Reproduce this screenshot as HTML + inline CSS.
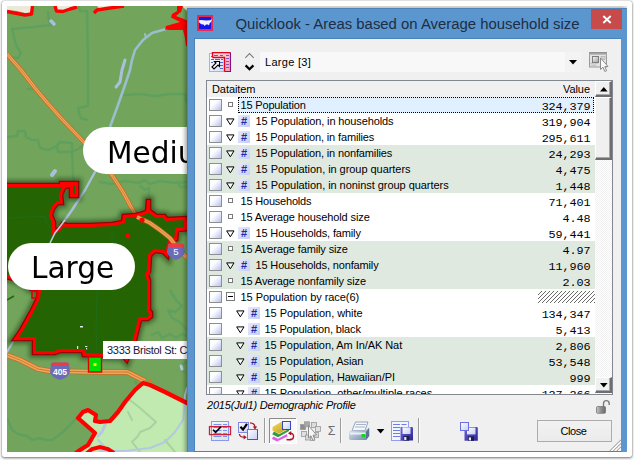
<!DOCTYPE html>
<html><head><meta charset="utf-8">
<style>
html,body{margin:0;padding:0;background:#fff;}
body{width:634px;height:460px;position:relative;overflow:hidden;font-family:"Liberation Sans",sans-serif;font-size:11px;color:#000;}
.abs{position:absolute;}
#frame{position:absolute;left:2px;top:1px;width:630px;height:456px;background:#fff;border-radius:2px;box-shadow:0 1px 3px rgba(0,0,0,.55),0 0 1px rgba(0,0,0,.5);}
#content{position:absolute;left:7px;top:6px;width:620px;height:446px;overflow:hidden;background:#72a55b;}
#content>*{position:absolute;}
/* everything inside #content uses page coords shifted by (-7,-6) via wrapper */
#pg{left:-7px;top:-6px;width:634px;height:460px;}
#pg>*{position:absolute;}
.lbl{background:#fff;border-radius:24px;font-family:"DejaVu Sans","Liberation Sans",sans-serif;font-size:31px;line-height:47px;height:47px;white-space:nowrap;color:#000;}
#win{left:187px;top:8px;width:440px;height:460px;background:#5b97ce;box-shadow:inset 1px 1px 0 #4a83bd,-2px 0 4px rgba(0,0,0,.35);}
#win>*{position:absolute;}
#client{left:7px;top:30px;width:426px;height:412px;background:#f0f0f0;border:1px solid #4a82bb;border-right-color:#5b97ce}
#client>*{position:absolute;}
.t{white-space:nowrap;letter-spacing:-0.08px;}
.row{position:absolute;left:0;width:388px;height:16px;}
.row.g{background:#dfe9df;}
.row>*{position:absolute;}
.cb{left:2px;top:2px;width:11px;height:10px;border:1px solid #8e8f8f;background:linear-gradient(135deg,#ffffff 35%,#e2e6fb 62%,#b6c0f6 100%);}
.sq{top:5px;width:3px;height:3px;border:1px solid #7a7a7a;background:#fff;}
.tri{top:5px;width:9px;height:8px;}
.hash{top:2px;width:12px;height:12px;background:linear-gradient(135deg,#e6e8fb,#c8cff4);color:#1a2aa8;font-weight:bold;font-size:11px;line-height:13px;text-align:center;}
.nm{top:1px;line-height:14px;}
.val{right:4.500px;top:2.500px;line-height:14px;font-family:"Liberation Mono",monospace;font-size:11.800px;letter-spacing:-0.100px;white-space:nowrap;}

.sbb{width:14px;background:#f0f0f0;border-style:solid;border-width:1px 2px 2px 1px;border-color:#fff #6e6e6e #6e6e6e #fff;box-shadow:inset -1px -1px 0 #a8a8a8}
</style></head><body>
<div id="frame"></div>
<div id="content"><div id="pg">
<svg id="map" style="left:0;top:0" width="634" height="460" viewBox="0 0 634 460">
<defs>
 <filter id="bl" x="-20%" y="-20%" width="140%" height="140%"><feGaussianBlur stdDeviation="2.2"/></filter>
</defs>
<rect x="0" y="0" width="634" height="460" fill="#72a55b"/>
<!-- beige beyond top border -->
<path d="M7 6 L33 6 L32 13 L25 13 L17 11 L7 10 Z" fill="#ece8da"/>
<path d="M55 6 L77 6 L70 8 L63 10 L57 10 Z" fill="#ece8da"/>
<path d="M97 6 L123 6 L110 7 L100 9 Z" fill="#ece8da"/>
<!-- light green region bottom -->
<path id="lg" d="M187 403 L165 392 L150 385 L143 383 L135 390 L125 402 L118 412 L110 421 L100 422 L95 421 L96 415 L88 410 L83 412 L78 418 L95 433 L88 445 L80 450 L75 454 L187 454 Z" fill="#c0eab0"/>
<!-- boundary lines (medium green) -->
<g fill="none" stroke="#60a05e" stroke-width="2.500" stroke-linejoin="round" stroke-linecap="round">
 <path d="M79 7 L80 11 L87 11 L88 60 L88 106 L78 108 L79 113 L81 118 L87 120"/>
 <path d="M48 12 L49 22 L52 25 L33 27 L12 29 L14 37 L16 45 L21 53 L18 58 L7 57"/>
 <path d="M28 89 L33 89"/>
 <path d="M7 137 L17 136 L18 131 L25 131 L26 137 L32 140 L38 140 L40 148 L48 150 L57 146 L58 152 L72 152 L73 175 L74 182"/>
 <path d="M57 146 L60 142 L72 143 L72 152 L80 148 L86 142"/>
 <path d="M125 95 L140 94 L155 96 L170 94 L185 94 L186 102"/>
 <path d="M100 182 L112 184 L125 181 L138 183 L145 180 L150 184 L160 181 L175 183 L187 182"/>
 <path d="M140 186 L145 190 L149 188 L149 198"/>
 <path d="M178 182 L180 187 L187 187"/>
 <path d="M170 290 L176 300 L182 306 L175 312 L168 310 L172 318 L180 322 L187 330"/>
 <path d="M152 335 L158 332 L162 338 L170 334 L176 338 L182 334 L187 336"/>
 <path d="M187 362 L180 366 L184 372"/>
 
 <path d="M8 420 L12 430 L18 434 L27 436 L32 440 L40 438 L45 440 L52 440 L62 433 L70 425 L77 418"/>
 <path d="M135 381 L138 386"/>
</g>
<g fill="none" stroke="#a6d3a0" stroke-width="2" stroke-linejoin="round" stroke-linecap="round">
 <path d="M130 400 L140 408 L156 422 L150 428 L140 432 L138 436 L132 442 L140 452"/>
 <path d="M165 440 L175 452"/>
 <path d="M128 412 L132 420"/>
</g>
<!-- rivers -->
<g fill="none" stroke="#9cbdcc" stroke-width="2.6" stroke-linecap="round" stroke-linejoin="round">
 <path d="M166 29 L152 33 L143 40 L135 50 L132 60 L130 70 L125 85 L118 105 L110 127"/>
 <path d="M145 34 L146 38" stroke-width="2"/>
</g>
<g fill="none" stroke="#a9c0dc" stroke-width="3" stroke-linecap="round" stroke-linejoin="round">
 <path d="M125 60 L122 70 L120 82 L116 87"/>
 <path d="M95 172 L85 190 L72 210 L65 220 L55 233 L50 243" stroke-width="2.4"/>
 <path d="M50 290 L42 294" stroke-width="2"/>
 <path d="M13 342 L7 352" stroke-width="2"/>
 <path d="M51 21 L54 24" stroke-width="3.5"/>
 <path d="M52 175 L55 171" stroke-width="4"/>
</g>
<g fill="none" stroke="#b4c8e4" stroke-width="2" stroke-linecap="round" stroke-linejoin="round">
 <path d="M187 388 L185 395 L184 410 L183 420 L175 432 L165 442 L150 448 L125 451 L100 451"/>
 <path d="M105 425 L102 432 L98 436" stroke-width="3"/>
 <path d="M98 440 L104 446"/>
 <path d="M181 366 L182 369" stroke-width="3"/>
</g>
<!-- orange roads -->
<g fill="none" stroke-linecap="butt" stroke-linejoin="round">
 <path id="r1" d="M7 54 L21 70 L35 88 L45 100 L60 117 L80 138 L100 160 L112 175 L123 192 L130 205 L137 217 L150 223 L160 230 L170 238 L176 246 L187 258" stroke="#cc6a1e" stroke-width="4.6"/>
 <path d="M7 54 L21 70 L35 88 L45 100 L60 117 L80 138 L100 160 L112 175 L123 192 L130 205 L137 217 L150 223 L160 230 L170 238 L176 246 L187 258" stroke="#eda75f" stroke-width="3"/>
 <path d="M7 54 L21 70 L35 88 L45 100 L60 117 L80 138 L100 160 L112 175 L123 192 L130 205 L137 217 L150 223 L160 230 L170 238 L176 246 L187 258" stroke="#d07a30" stroke-width="0.8"/>
 <path id="r2" d="M7 355 L20 360 L38 369 L50 371 L100 372 L127 372 L135 376 L145 381" stroke="#cc6a1e" stroke-width="5.6"/>
 <path d="M7 355 L20 360 L38 369 L50 371 L100 372 L127 372 L135 376 L145 381" stroke="#eda75f" stroke-width="4"/>
 <path d="M7 355 L20 360 L38 369 L50 371 L100 372 L127 372 L135 376 L145 381" stroke="#d07a30" stroke-width="1"/>
</g>
<!-- Large region -->
<clipPath id="bigclip"><path d="M0 184 L60 184 L60 182 L78 182 L78 197 L70 197 L70 187 L65 188 L62 195 L63 204 L58 204 L54 209 L52 215 L55 222 L55 230 L59 228 L62 223 L67 224 L90 224 L112 223 L122 221 L123 215 L135 214 L140 213 L146 211 L147 200 L150 200 L150 210 L157 215 L165 215 L167 218 L186 217 L187 222 L187 230 L178 231 L177 240 L170 243 L168 258 L163 253 L155 252 L151 256 L150 272 L148 275 L150 280 L150 310 L152 312 L152 317 L148 320 L141 320 L139 328 L136 340 L131 352 L127 362 L123 357.500 L100 356.500 L83 356 L82 352 L60 352 L55 354 L33 354 L33 340 L13 340 L20 330 L30 312 L37 298 L38 290 L31 290 L20 282 L0 276 Z"/></clipPath>
<path id="big" d="M0 184 L60 184 L60 182 L78 182 L78 197 L70 197 L70 187 L65 188 L62 195 L63 204 L58 204 L54 209 L52 215 L55 222 L55 230 L59 228 L62 223 L67 224 L90 224 L112 223 L122 221 L123 215 L135 214 L140 213 L146 211 L147 200 L150 200 L150 210 L157 215 L165 215 L167 218 L186 217 L187 222 L187 230 L178 231 L177 240 L170 243 L168 258 L163 253 L155 252 L151 256 L150 272 L148 275 L150 280 L150 310 L152 312 L152 317 L148 320 L141 320 L139 328 L136 340 L131 352 L127 362 L123 357.500 L100 356.500 L83 356 L82 352 L60 352 L55 354 L33 354 L33 340 L13 340 L20 330 L30 312 L37 298 L38 290 L31 290 L20 282 L0 276 Z" fill="none" stroke="#16300c" stroke-width="8" opacity="0.5" filter="url(#bl)"/>
<path d="M0 184 L60 184 L60 182 L78 182 L78 197 L70 197 L70 187 L65 188 L62 195 L63 204 L58 204 L54 209 L52 215 L55 222 L55 230 L59 228 L62 223 L67 224 L90 224 L112 223 L122 221 L123 215 L135 214 L140 213 L146 211 L147 200 L150 200 L150 210 L157 215 L165 215 L167 218 L186 217 L187 222 L187 230 L178 231 L177 240 L170 243 L168 258 L163 253 L155 252 L151 256 L150 272 L148 275 L150 280 L150 310 L152 312 L152 317 L148 320 L141 320 L139 328 L136 340 L131 352 L127 362 L123 357.500 L100 356.500 L83 356 L82 352 L60 352 L55 354 L33 354 L33 340 L13 340 L20 330 L30 312 L37 298 L38 290 L31 290 L20 282 L0 276 Z" fill="#246402" stroke="#9a0000" stroke-width="2.6" stroke-linejoin="miter"/>
<path d="M0 184 L60 184 L60 182 L78 182 L78 197 L70 197 L70 187 L65 188 L62 195 L63 204 L58 204 L54 209 L52 215 L55 222 L55 230 L59 228 L62 223 L67 224 L90 224 L112 223 L122 221 L123 215 L135 214 L140 213 L146 211 L147 200 L150 200 L150 210 L157 215 L165 215 L167 218 L186 217 L187 222 L187 230 L178 231 L177 240 L170 243 L168 258 L163 253 L155 252 L151 256 L150 272 L148 275 L150 280 L150 310 L152 312 L152 317 L148 320 L141 320 L139 328 L136 340 L131 352 L127 362 L123 357.500 L100 356.500 L83 356 L82 352 L60 352 L55 354 L33 354 L33 340 L13 340 L20 330 L30 312 L37 298 L38 290 L31 290 L20 282 L0 276 Z" fill="none" stroke="#ff0000" stroke-width="6" stroke-linejoin="miter" clip-path="url(#bigclip)"/>
<rect x="32" y="291" width="5" height="7" fill="none" stroke="#e00000" stroke-width="1.6"/>
<!-- subtle lines inside big region -->
<g fill="none" stroke="#1f6a12" stroke-width="1.6">
 <path d="M10 218 L45 216 L47 224 L52 229"/>
 <path d="M7 300 L14 296"/>
 <path d="M97 290 L96 330 L97 352"/>
 <path d="M112 232 L112 243"/>
</g>
<!-- road over region, redraw segment -->
<path d="M137 217 L150 223 L160 230 L170 238 L176 246" fill="none" stroke="#cc6a1e" stroke-width="4.6"/>
<path d="M137 217 L150 223 L160 230 L170 238 L176 246" fill="none" stroke="#eda75f" stroke-width="3"/>
<path d="M137 217 L150 223 L160 230 L170 238 L176 246" fill="none" stroke="#d07a30" stroke-width="0.8"/>
<!-- river over big region -->
<path d="M65 220 L55 233 L50 243" fill="none" stroke="#b9cde0" stroke-width="1.6"/>
<!-- red dots -->
<circle cx="128" cy="236" r="2.4" fill="#f00"/><circle cx="142" cy="220" r="2.6" fill="#f00"/><circle cx="148" cy="273" r="2.2" fill="#f00"/>
<g fill="#dfe6f2"><rect x="80" y="326" width="3" height="1.500"/><rect x="77" y="346" width="1.2" height="3"/><rect x="85" y="346" width="2.4" height="1"/><rect x="86" y="348" width="1.2" height="1.4"/></g>
<!-- top red border -->
<g fill="none" stroke="#ff0000" stroke-width="3.4" stroke-linejoin="round">
 <path d="M7 11.5 L17 13.5 L25 15 L31.5 14 L32.5 6"/>
 <path d="M55 6 L56.5 11 L63 11.5 L70 9 L77 7"/>
 <path d="M94 13 L97 10 L110 8 L124 6"/>
 
</g>
<path d="M182 6 L188 6 L188 12 Z" fill="#ece8da"/><rect x="187" y="6" width="440" height="2" fill="#ece8da"/>
<path d="M177 6 L183 6 L181 12 L176 16 L184 19 L188 21 L188 46 L186 46 L185 38 L183 30 L170 30 L165 29.500 L166 26 L180 22 L171 17.500 L172 14 L177 11 Z" fill="#ff0000"/>
<!-- light-green region red border -->
<path d="M189 404 L165 392 L150 385 L143 383 L135 390 L125 402 L118 412 L110 421 L100 422 L95 421 L96 415 L88 410 L83 412 L78 418 L95 433 L88 445 L80 450 L72 456" fill="none" stroke="#ff0000" stroke-width="4.2" stroke-linejoin="round"/>
<path d="M86 454 L92 449 L100 447 L108 449 L114 453" fill="none" stroke="#ff0000" stroke-width="4"/>

<circle cx="150" cy="381" r="1.5" fill="#ff6a00"/>
<!-- green marker -->
<rect x="88.500" y="357" width="13" height="15" fill="#00e000" stroke="#e00000" stroke-width="1.400"/>
<rect x="93.500" y="363" width="3" height="3" fill="#ffe800"/>
<!-- shields -->
<g id="s405">
 <path d="M51 364 Q51 362.500 53 362.500 L67 362.500 Q69 362.500 69 364 L70 372 Q69 377 60 380 Q51 377 50 372 Z" fill="#6b6cb8"/>
 <path d="M51 366 L51.600 363.500 Q52 362.400 53.500 362.400 L66.500 362.400 Q68 362.400 68.400 363.500 L69 366 Z" fill="#ee3a43"/>
 <text x="60" y="375.300" font-family="Liberation Sans, sans-serif" font-size="8.500" font-weight="bold" fill="#fff" text-anchor="middle">405</text>
</g>
<g id="s5">
 <path d="M168 245 Q168 243.500 170 243.500 L182 243.500 Q184 243.500 184 245 L185 252 Q184 257 176 260 Q168 257 167 252 Z" fill="#6b6cb8"/>
 <path d="M168 247 L168.600 244.500 Q169 243.400 170.500 243.400 L181.500 243.400 Q183 243.400 183.400 244.500 L184 247 Z" fill="#ee3a43"/>
 <text x="176" y="255.300" font-family="Liberation Sans, sans-serif" font-size="9.500" fill="#fff" text-anchor="middle">5</text>
</g>
</svg>

<div class="lbl" style="left:83px;top:127px;width:140px;padding-left:24px;box-sizing:border-box" id="lmed"><span style="display:inline-block;transform:scaleX(.955);transform-origin:0 50%;position:relative;top:1.500px">Medium</span></div>
<div class="lbl" style="left:8px;top:243px;width:127px;text-align:center" id="llarge"><span style="display:inline-block;transform:scaleX(.955);position:relative;top:1px;left:1px">Large</span></div>
<div style="left:103px;top:341px;width:100px;height:18px;background:#fff;line-height:18px;white-space:nowrap;color:#14143c;letter-spacing:-0.3px" id="laddr"><span style="padding-left:4px">3333 Bristol St: Costa Mesa</span></div>


<div id="win">
 <svg style="left:10px;top:7px" width="16" height="16" viewBox="0 0 16 16"><rect x="0" y="0" width="16" height="16" fill="#e8284c"/><rect x="2" y="2" width="12" height="12" fill="#1414ee"/><path d="M1.5 5.5 L4 5 L9 5.4 L13 5.2 L15 4.2 L14.2 6.8 L12.6 8.2 L12 10.6 L11 9.6 L9 9.6 L7.6 11 L6.6 9.6 L4.4 9.2 L2.4 7.8 Z" fill="#f2f4ff"/></svg>
 <div class="abs" style="left:48.5px;top:6px;font-size:14.9px;line-height:20px;color:#1f2d45;white-space:nowrap" id="title">Quicklook - Areas based on Average household size</div>
 <div style="left:404px;top:1px;width:31px;height:20px;background:#c84b4b"></div>
 <svg style="left:414px;top:6px" width="11" height="10" viewBox="0 0 11 10"><path d="M2.300 2 L9.700 9 M9.700 2 L2.300 9" stroke="#fff" stroke-width="1.900"/></svg>
 <div id="client">
  <svg style="left:14px;top:13px" width="22" height="20" viewBox="0 0 22 20">
 <defs><linearGradient id="g1" x1="0" y1="0" x2="1" y2="1"><stop offset="0" stop-color="#fff"/><stop offset="1" stop-color="#d4dcfa"/></linearGradient>
 <linearGradient id="g2" x1="0" y1="0" x2="1" y2="1"><stop offset="0" stop-color="#ffe0e0"/><stop offset="1" stop-color="#eea0b4"/></linearGradient></defs>
 <rect x="0.500" y="1.500" width="15" height="18" fill="url(#g1)" stroke="#a4acf2"/>
 <g stroke="#4a66d8" stroke-width="1"><path d="M2 7.500h3M6 7.500h5M12 7.500h2M2 10.500h2M11 10.500h3M11 13.500h3M11 16.500h3M2 4.500h2"/></g>
 <path d="M3.500 0.500 H21.500 V19.500 H15.500 V5.500 H3.500 Z" fill="url(#g2)"/>
 <g stroke="#8a4cb4" stroke-width="1"><path d="M5 3.500h4M11 3.500h3M17 3.500h3M17 6.500h3M17 9.500h3M17 12.500h3M17 15.500h3"/></g>
 <path d="M3.500 5.500 V0.500 H21.500" fill="none" stroke="#e8001c" stroke-width="1.400"/>
 <path d="M3.500 5.500 H15.500 V19.500" fill="none" stroke="#e8001c" stroke-width="1.400"/>
 <path d="M21.500 0.500 V19.500 H15.500" fill="none" stroke="#8c0a8c" stroke-width="1.200"/>
 <path d="M5.500 9.500 H10.500 V14.500 L9 13 L5 17 L3 15 L7 11 Z" fill="#fff" stroke="#000" stroke-width="1.100" stroke-linejoin="miter"/>
</svg>

  <div style="left:65px;top:13px;width:321px;height:20px;background:#f8f8f8"></div>
  <div style="left:370px;top:13px;width:16px;height:20px;background:#f3f3f3"></div>
  <svg style="left:373.600px;top:20.800px" width="8" height="5" viewBox="0 0 8 5"><path d="M0 0 L8 0 L4 4.400 Z" fill="#000"/></svg>
  <div class="t" style="left:70px;top:16px;line-height:14px;letter-spacing:0.3px">Large [3]</div>
  <svg style="left:49px;top:13px" width="12" height="20" viewBox="0 0 12 20"><path d="M1.300 5.800 L5.500 1.600 L9.700 5.800" fill="none" stroke="#7c7c7c" stroke-width="1.100"/><path d="M1.600 13.400 L5.500 17.200 L9.400 13.400" fill="none" stroke="#000" stroke-width="2.300"/></svg>
  <svg style="left:394px;top:13px" width="21" height="21" viewBox="0 0 21 21">
 <defs><linearGradient id="g3" x1="0" y1="0" x2="0" y2="1"><stop offset="0" stop-color="#8a8a8a"/><stop offset="1" stop-color="#c8c8c8"/></linearGradient>
 <linearGradient id="g4" x1="0" y1="0" x2="1" y2="1"><stop offset="0" stop-color="#fafafa"/><stop offset="1" stop-color="#9c9c9c"/></linearGradient></defs>
 <rect x="0.500" y="0.500" width="17" height="14.500" fill="#e4e4e4" stroke="#9a9a9a"/>
 <rect x="0.500" y="0.500" width="17" height="2.500" fill="url(#g3)"/>
 <path d="M1 11 L5 12 L9 11.500 M1.500 13 L7 13.500" stroke="#c2c2c2" stroke-width="1" fill="none"/>
 <rect x="3.500" y="4.500" width="6" height="6" fill="url(#g4)" stroke="#7e7e7e"/>
 <rect x="12" y="4.500" width="4" height="3" fill="#d0d0d0" stroke="#aaa" stroke-width="0.600"/>
 <path d="M11.500 6 L11.500 17.500 L14 15.200 L15.800 19.500 L17.600 18.700 L15.800 14.600 L19 14.400 Z" fill="#fafafa" stroke="#8c8c8c" stroke-width="1"/>
</svg>

  <div id="list" style="left:11px;top:41px;width:405px;height:313px;border:1px solid #828790;background:#fff;overflow:hidden">
   <div class="abs" style="left:0;top:0;width:389px;height:16px;background:#f0f0f0"></div>
   <div class="abs t" style="left:5px;top:1px;line-height:14px">Dataitem</div>
   <div class="abs t" style="left:356px;top:1px;line-height:14px" id="valhdr">Value</div>
   <div class="row " style="top:16px"><div class="cb"></div><div style="left:31px;top:0;width:356px;height:16px;background:#e1f0ff;outline:1px dotted #000;outline-offset:-1px"></div><div class="sq" style="left:21px"></div><div class="nm t" style="left:33.5px;letter-spacing:-0.165px">15 Population</div><div class="val">324,379</div></div>
<div class="row " style="top:32px"><div class="cb"></div><svg class="tri" style="left:19px" viewBox="0 0 9 8"><path d="M0.700 0.900 L8 0.900 L4.350 6.800 Z" fill="#fff" stroke="#000" stroke-width="1" stroke-linejoin="miter"/></svg><div class="hash" style="left:31px">#</div><div class="nm t" style="left:48.5px;letter-spacing:-0.119px">15 Population, in households</div><div class="val">319,904</div></div>
<div class="row " style="top:48px"><div class="cb"></div><svg class="tri" style="left:19px" viewBox="0 0 9 8"><path d="M0.700 0.900 L8 0.900 L4.350 6.800 Z" fill="#fff" stroke="#000" stroke-width="1" stroke-linejoin="miter"/></svg><div class="hash" style="left:31px">#</div><div class="nm t" style="left:48.5px;letter-spacing:-0.140px">15 Population, in families</div><div class="val">295,611</div></div>
<div class="row g" style="top:64px"><div class="cb"></div><svg class="tri" style="left:19px" viewBox="0 0 9 8"><path d="M0.700 0.900 L8 0.900 L4.350 6.800 Z" fill="#fff" stroke="#000" stroke-width="1" stroke-linejoin="miter"/></svg><div class="hash" style="left:31px">#</div><div class="nm t" style="left:48.5px;letter-spacing:-0.140px">15 Population, in nonfamilies</div><div class="val">24,293</div></div>
<div class="row g" style="top:80px"><div class="cb"></div><svg class="tri" style="left:19px" viewBox="0 0 9 8"><path d="M0.700 0.900 L8 0.900 L4.350 6.800 Z" fill="#fff" stroke="#000" stroke-width="1" stroke-linejoin="miter"/></svg><div class="hash" style="left:31px">#</div><div class="nm t" style="left:48.5px;letter-spacing:-0.050px">15 Population, in group quarters</div><div class="val">4,475</div></div>
<div class="row g" style="top:96px"><div class="cb"></div><svg class="tri" style="left:19px" viewBox="0 0 9 8"><path d="M0.700 0.900 L8 0.900 L4.350 6.800 Z" fill="#fff" stroke="#000" stroke-width="1" stroke-linejoin="miter"/></svg><div class="hash" style="left:31px">#</div><div class="nm t" style="left:48.5px;letter-spacing:-0.050px">15 Population, in noninst group quarters</div><div class="val">1,448</div></div>
<div class="row " style="top:112px"><div class="cb"></div><div class="sq" style="left:21px"></div><div class="nm t" style="left:33.5px;letter-spacing:-0.195px">15 Households</div><div class="val">71,401</div></div>
<div class="row " style="top:128px"><div class="cb"></div><div class="sq" style="left:21px"></div><div class="nm t" style="left:33.5px;letter-spacing:-0.110px">15 Average household size</div><div class="val">4.48</div></div>
<div class="row " style="top:144px"><div class="cb"></div><svg class="tri" style="left:19px" viewBox="0 0 9 8"><path d="M0.700 0.900 L8 0.900 L4.350 6.800 Z" fill="#fff" stroke="#000" stroke-width="1" stroke-linejoin="miter"/></svg><div class="hash" style="left:31px">#</div><div class="nm t" style="left:48.5px;letter-spacing:-0.140px">15 Households, family</div><div class="val">59,441</div></div>
<div class="row g" style="top:160px"><div class="cb"></div><div class="sq" style="left:21px"></div><div class="nm t" style="left:33.5px;letter-spacing:-0.120px">15 Average family size</div><div class="val">4.97</div></div>
<div class="row g" style="top:176px"><div class="cb"></div><svg class="tri" style="left:19px" viewBox="0 0 9 8"><path d="M0.700 0.900 L8 0.900 L4.350 6.800 Z" fill="#fff" stroke="#000" stroke-width="1" stroke-linejoin="miter"/></svg><div class="hash" style="left:31px">#</div><div class="nm t" style="left:48.5px;letter-spacing:-0.150px">15 Households, nonfamily</div><div class="val">11,960</div></div>
<div class="row g" style="top:192px"><div class="cb"></div><div class="sq" style="left:21px"></div><div class="nm t" style="left:33.5px;letter-spacing:-0.110px">15 Average nonfamily size</div><div class="val">2.03</div></div>
<div class="row " style="top:208px"><div class="cb"></div><div style="left:19px;top:3px;width:7px;height:7px;border:1px solid #7a7a7a;background:#fff"></div><div style="left:21px;top:7px;width:5px;height:1px;background:#000"></div><div class="nm t" style="left:33.5px;letter-spacing:-0.050px">15 Population by race(6)</div><svg style="left:331px;top:2px" width="57" height="12"><defs><pattern id="ht" width="4" height="4" patternUnits="userSpaceOnUse"><path d="M-1 1 L1 -1 M0 4 L4 0 M3 5 L5 3" stroke="#5a5a5a" stroke-width="0.900"/></pattern></defs><rect width="57" height="12" fill="#fff"/><rect width="57" height="12" fill="url(#ht)"/></svg></div>
<div class="row " style="top:224px"><div class="cb"></div><svg class="tri" style="left:29px" viewBox="0 0 9 8"><path d="M0.700 0.900 L8 0.900 L4.350 6.800 Z" fill="#fff" stroke="#000" stroke-width="1" stroke-linejoin="miter"/></svg><div class="hash" style="left:41px">#</div><div class="nm t" style="left:57.5px;letter-spacing:-0.050px">15 Population, white</div><div class="val">134,347</div></div>
<div class="row " style="top:240px"><div class="cb"></div><svg class="tri" style="left:29px" viewBox="0 0 9 8"><path d="M0.700 0.900 L8 0.900 L4.350 6.800 Z" fill="#fff" stroke="#000" stroke-width="1" stroke-linejoin="miter"/></svg><div class="hash" style="left:41px">#</div><div class="nm t" style="left:57.5px;letter-spacing:-0.137px">15 Population, black</div><div class="val">5,413</div></div>
<div class="row g" style="top:256px"><div class="cb"></div><svg class="tri" style="left:29px" viewBox="0 0 9 8"><path d="M0.700 0.900 L8 0.900 L4.350 6.800 Z" fill="#fff" stroke="#000" stroke-width="1" stroke-linejoin="miter"/></svg><div class="hash" style="left:41px">#</div><div class="nm t" style="left:57.5px;letter-spacing:-0.065px">15 Population, Am In/AK Nat</div><div class="val">2,806</div></div>
<div class="row g" style="top:272px"><div class="cb"></div><svg class="tri" style="left:29px" viewBox="0 0 9 8"><path d="M0.700 0.900 L8 0.900 L4.350 6.800 Z" fill="#fff" stroke="#000" stroke-width="1" stroke-linejoin="miter"/></svg><div class="hash" style="left:41px">#</div><div class="nm t" style="left:57.5px;letter-spacing:-0.070px">15 Population, Asian</div><div class="val">53,548</div></div>
<div class="row g" style="top:288px"><div class="cb"></div><svg class="tri" style="left:29px" viewBox="0 0 9 8"><path d="M0.700 0.900 L8 0.900 L4.350 6.800 Z" fill="#fff" stroke="#000" stroke-width="1" stroke-linejoin="miter"/></svg><div class="hash" style="left:41px">#</div><div class="nm t" style="left:57.5px;letter-spacing:-0.065px">15 Population, Hawaiian/PI</div><div class="val">999</div></div>
<div class="row " style="top:304px"><div class="cb"></div><svg class="tri" style="left:29px" viewBox="0 0 9 8"><path d="M0.700 0.900 L8 0.900 L4.350 6.800 Z" fill="#fff" stroke="#000" stroke-width="1" stroke-linejoin="miter"/></svg><div class="hash" style="left:41px">#</div><div class="nm t" style="left:57.5px;letter-spacing:-0.050px">15 Population, other/multiple races</div><div class="val">127,266</div></div>
   <div class="abs" id="sbtrack" style="left:388px;top:0;width:17px;height:313px;background-color:#f1f1f1;background-image:linear-gradient(45deg,#fff 25%,transparent 25%,transparent 75%,#fff 75%),linear-gradient(45deg,#fff 25%,transparent 25%,transparent 75%,#fff 75%);background-size:2px 2px;background-position:0 0,1px 1px"></div>
   <div class="abs sbb" style="left:388px;top:0;height:13px"></div>
   <svg class="abs" style="left:392.700px;top:5.800px" width="8" height="5" viewBox="0 0 8 5"><path d="M0 4.400 L7.600 4.400 L3.800 0 Z" fill="#000"/></svg>
   <div class="abs sbb" style="left:388px;top:16px;height:59.500px"></div>
   <div class="abs sbb" style="left:388px;top:296px;height:13px"></div>
   <svg class="abs" style="left:392.700px;top:302.400px" width="8" height="5" viewBox="0 0 8 5"><path d="M0 0 L7.600 0 L3.800 4.400 Z" fill="#000"/></svg>
  </div>
  <div class="t" style="left:12px;top:358.500px;line-height:14px;font-style:italic;letter-spacing:-0.2px" id="prof">2015(Jul1) Demographic Profile</div>
  <svg style="left:10px;top:376px" width="300" height="32" viewBox="205 415 300 32">
 <defs>
  <linearGradient id="h1" x1="0" y1="0" x2="1" y2="1"><stop offset="0" stop-color="#ffffff"/><stop offset="1" stop-color="#c6cef6"/></linearGradient>
  <linearGradient id="h2" x1="0" y1="0" x2="0.300" y2="1"><stop offset="0" stop-color="#f4f6ff"/><stop offset="1" stop-color="#dce8dc"/></linearGradient>
  <linearGradient id="h3" x1="0" y1="0" x2="1" y2="1"><stop offset="0" stop-color="#f6dc50"/><stop offset="1" stop-color="#b89820"/></linearGradient>
  <linearGradient id="h4" x1="0" y1="0" x2="1" y2="1"><stop offset="0" stop-color="#7068d8"/><stop offset="1" stop-color="#2c2494"/></linearGradient>
  <linearGradient id="h5" x1="0" y1="0" x2="1" y2="1"><stop offset="0" stop-color="#e8eef6"/><stop offset="1" stop-color="#6c86aa"/></linearGradient>
  <linearGradient id="h6" x1="0" y1="0" x2="1" y2="1"><stop offset="0" stop-color="#f4f4f4"/><stop offset="1" stop-color="#a8a8a8"/></linearGradient>
 </defs>
 <!-- icon A -->
 <rect x="211.500" y="421.500" width="17" height="19" fill="url(#h2)" stroke="#8c96ea"/>
 <g stroke="#7e90ee" stroke-width="1"><path d="M213.500 424.500h8M223 424.500h4M213.500 427.500h8M223 427.500h4M213.500 430.500h8M223 430.500h4M213.500 433.500h8M223 433.500h4M213.500 436.500h8M223 436.500h4"/></g>
 <rect x="209.500" y="426.600" width="21" height="8" fill="none" stroke="#c8203e" stroke-width="1.300"/>
 <path d="M213 429.800 L215.600 432.400 L221 426.800" fill="none" stroke="#000" stroke-width="1.600"/>
 <!-- icon B -->
 <rect x="238.500" y="422.500" width="10" height="10" fill="url(#h1)" stroke="#8088e0"/>
 <path d="M240.400 426.800 L243 429.600 L247 423.800" fill="none" stroke="#000" stroke-width="2.200"/>
 <rect x="247.500" y="429.500" width="10" height="10" fill="url(#h1)" stroke="#6a72dc"/>
 <path d="M247.500 439.500 H257.500 V429.500" fill="none" stroke="#4a50c4" stroke-width="1"/>
 <path d="M250 422.800 Q254.600 423 255 427" fill="none" stroke="#b0142c" stroke-width="1.300"/>
 <path d="M252.800 426.400 L257.200 426.400 L255 429.400 Z" fill="#b0142c"/>
 <path d="M239.400 434 Q240 437.400 244 437.200" fill="none" stroke="#b0142c" stroke-width="1.300"/>
 <path d="M243.600 435 L243.600 439.400 L246.800 437.200 Z" fill="#b0142c"/>
 <!-- sep -->
 <rect x="264" y="418" width="1" height="25" fill="#9c9c9c"/><rect x="265" y="418" width="1" height="25" fill="#fbfbfb"/>
 <!-- pressed button -->
 <rect x="269" y="418" width="27" height="25" fill="#f9f9f9"/>
 <path d="M269.500 443 V418.500 H296" fill="none" stroke="#8a8a8a" stroke-width="1"/>
 <path d="M269.500 443.500 H296.500 V418.500" fill="none" stroke="#ffffff" stroke-width="1"/>
 <path d="M272.500 427 L282 421.500 L289 424.500 L289 428 L279 433.800 L272.500 430.500 Z" fill="url(#h3)"/>
 <path d="M274 431.600 L279 434.200 L289 428.800 L289 431 L278 437.200 L272.200 434.200 Z" fill="#2f9a40"/>
 <path d="M273.500 436.400 L278 438.800 L287 434 L287.500 436.500 L277 441.600 L271.800 438.800 Z" fill="#e25fe2"/>
 <rect x="282.500" y="421.500" width="8" height="8" fill="url(#h1)" stroke="#3a42c8"/>
 <path d="M286.500 439.500 Q293.500 440.500 293.600 436.500 Q293.500 433 290 433.200" fill="none" stroke="#b01224" stroke-width="1.400"/>
 <path d="M291.200 431 L291.200 435.600 L288 433.200 Z" fill="#b01224"/>
 <!-- icon 4 disabled -->
 <g stroke="#9a9a9a" stroke-width="0.800">
  <rect x="300.500" y="424.500" width="5" height="5" fill="#8c8c8c"/>
  <rect x="304.500" y="421.800" width="5" height="5" fill="#a8a8a8"/>
  <rect x="311.500" y="422.500" width="5" height="5" fill="#dcdcdc"/>
  <rect x="315.500" y="426.500" width="5" height="5" fill="#e2e2e2"/>
  <rect x="301.500" y="431.500" width="5" height="5" fill="#e0e0e0"/>
  <rect x="305.500" y="435" width="5" height="5" fill="#d8d8d8"/>
  <rect x="313.500" y="432.500" width="5" height="5" fill="#d4d4d4"/>
  <rect x="310.500" y="436.500" width="4" height="4" fill="#e4e4e4"/>
 </g>
 <path d="M308.500 425.500 L308.500 438 L311 435.800 L312.800 440.400 L314.800 439.600 L313 435.200 L316.500 435 Z" fill="#f6f6f6" stroke="#8e8e8e" stroke-width="1"/>
 <text x="327.700" y="435" font-family="Liberation Sans, sans-serif" font-size="12.500" fill="#6c6c6c">Σ</text>
 <rect x="340" y="418" width="1" height="25" fill="#9c9c9c"/><rect x="341" y="418" width="1" height="25" fill="#fbfbfb"/>
 <!-- printer -->
 <path d="M355.500 422 L368 422 L365 430.500 L352 430.500 Z" fill="#f4f6fa" stroke="#8a9ab4" stroke-width="0.900"/>
 <path d="M356 424.500 L366 424.500 M355 427 L365 427" stroke="#a8b4c8" stroke-width="1"/>
 <path d="M349 433 Q349 430.500 352 430.500 L365.500 430.500 L369 427.500 L369.200 436 L366 440 L351 440 Q349 440 349 438 Z" fill="url(#h5)"/>
 <path d="M366 432 L369.200 428 L369.200 436 L366 440 Z" fill="#5a7296"/>
 <rect x="350" y="432.500" width="15.500" height="2" fill="#f2f5fa" opacity="0.900"/>
 <rect x="361.500" y="434" width="3.500" height="3.200" fill="#18d418"/>
 <path d="M376.800 429 L384.400 429 L380.600 433.400 Z" fill="#000"/>
 <!-- icon 6 -->
 <rect x="391.500" y="421.500" width="17" height="19" fill="#f2f4ff" stroke="#949cf0"/>
 <g stroke="#6a7ee6" stroke-width="1.200"><path d="M393 424.500h7M401.500 424.500h5M393 427.500h7M393 430.500h7M393 433.500h7M393 436.500h7"/></g>
 <path d="M400.500 427 H412.200 L413 427.800 V440.500 H400.500 Z" fill="url(#h4)"/>
 <rect x="402.500" y="427.400" width="8" height="6.600" fill="url(#h1)"/>
 <rect x="403.500" y="436" width="6" height="4.500" fill="#1c1c50"/><rect x="404.200" y="437" width="2.200" height="3" fill="#e8e8f4"/>
 <rect x="418" y="418" width="1" height="25" fill="#9c9c9c"/><rect x="419" y="418" width="1" height="25" fill="#fbfbfb"/>
 <!-- icon 7 -->
 <path d="M464.500 427 H477 L477.800 427.800 V440.800 H464.500 Z" fill="url(#h4)"/>
 <rect x="467" y="427.600" width="8.500" height="6.800" fill="url(#h1)"/>
 <rect x="468" y="436.400" width="6" height="4.400" fill="#1c1c50"/><rect x="468.800" y="437.400" width="2.200" height="3" fill="#e8e8f4"/>
 <rect x="460.500" y="422.500" width="8" height="8" fill="url(#h1)" stroke="#6a70e0"/>
</svg>

  <div style="left:342px;top:381px;width:73px;height:20px;border:1px solid #acacac;background:linear-gradient(#f2f2f2,#ebebeb)"></div>
  <div class="t" style="left:341px;top:385px;width:75px;text-align:center;line-height:14px;letter-spacing:-0.45px">Close</div>
  <svg style="left:400px;top:360px" width="18" height="16" viewBox="595 399 18 16">
 <defs><linearGradient id="k1" x1="0" y1="0" x2="1" y2="0"><stop offset="0" stop-color="#c8c8c8"/><stop offset="0.500" stop-color="#8e8e8e"/><stop offset="1" stop-color="#6a6a6a"/></linearGradient></defs>
 <path d="M603.500 407 V403.500 Q603.500 400.600 606.300 400.600 Q609.200 400.600 609.200 403.500 V405" fill="none" stroke="#7a7a7a" stroke-width="1.400"/>
 <rect x="596.500" y="406.500" width="9" height="6.800" rx="1" fill="url(#k1)" stroke="#767676" stroke-width="0.800"/>
</svg>

  <svg style="left:414px;top:400px" width="12" height="12" viewBox="0 0 12 12"><path d="M1 12 L12 1 M4.500 12 L12 4.500 M8 12 L12 8" stroke="#a6a6a6" stroke-width="1.300"/><path d="M2.300 12 L12 2.300 M5.800 12 L12 5.800 M9.300 12 L12 9.300" stroke="#fff" stroke-width="1.100"/></svg>
 </div>
</div>

</div></div>
</body></html>
